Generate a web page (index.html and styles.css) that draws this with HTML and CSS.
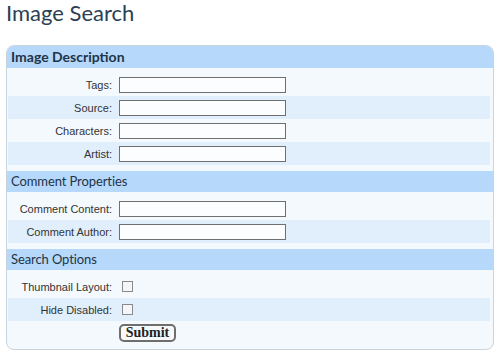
FILE: index.html
```html
<!DOCTYPE html>
<html>
<head>
<meta charset="utf-8">
<link rel="stylesheet" href="styles.css">
</head>
<body>
<h1 class="title">Image Search</h1>
<form class="panel">
  <div class="section-head first">Image Description</div>
  <div class="section-body">
    <div class="row"><label class="lbl">Tags:</label><input class="txt" type="text"></div>
    <div class="row alt"><label class="lbl">Source:</label><input class="txt" type="text"></div>
    <div class="row"><label class="lbl">Characters:</label><input class="txt" type="text"></div>
    <div class="row alt"><label class="lbl">Artist:</label><input class="txt" type="text"></div>
  </div>
  <div class="section-head">Comment Properties</div>
  <div class="section-body">
    <div class="row"><label class="lbl">Comment Content:</label><input class="txt" type="text"></div>
    <div class="row alt"><label class="lbl">Comment Author:</label><input class="txt" type="text"></div>
  </div>
  <div class="section-head">Search Options</div>
  <div class="section-body last">
    <div class="row"><label class="lbl">Thumbnail Layout:</label><span class="chk"></span></div>
    <div class="row alt"><label class="lbl">Hide Disabled:</label><span class="chk"></span></div>
    <div class="row"><span></span><button class="btn" type="button">Submit</button></div>
  </div>
</form>
</body>
</html>
```
FILE: styles.css
```css
html, body {
  margin: 0;
  padding: 0;
  background: #ffffff;
}
body {
  width: 500px;
  height: 353px;
  overflow: hidden;
}
.title {
  margin: 0;
  padding: 0 0 0 6px;
  height: 45px;
  box-sizing: border-box;
  font-family: Lato, "Open Sans", sans-serif;
  font-weight: 400;
  font-size: 22px;
  line-height: 26px;
  color: #2b4053;
}
.panel {
  margin: 0 0 0 6px;
  width: 488px;
  box-sizing: border-box;
  border: 1px solid #c9d5dd;
  border-radius: 8px;
  background: #f4f9fe;
  overflow: hidden;
}
.section-head {
  height: 21px;
  padding-left: 4px;
  background: #b5d8fb;
  font-family: Lato, "Open Sans", sans-serif;
  font-size: 13px;
  letter-spacing: -0.1px;
  line-height: 21px;
  color: #1f3447;
}
.section-head.first {
  height: 22px;
  line-height: 22px;
  font-size: 14px;
  letter-spacing: 0;
  font-weight: 700;
}
.section-body {
  padding: 5px 3px 6px 1px;
}
.section-body.last {
  padding-bottom: 5px;
}
.row {
  display: grid;
  grid-template-columns: 104px 167px;
  column-gap: 7px;
  align-items: center;
  height: 23px;
}
.row.alt {
  background: #e1effd;
}
.lbl {
  text-align: right;
  font-family: "Liberation Sans", Arial, sans-serif;
  font-size: 11px;
  color: #333333;
}
.txt {
  box-sizing: border-box;
  width: 167px;
  height: 16px;
  margin: 0;
  padding: 0;
  border: 1px solid #6f6f6f;
  background: #fbfdff;
}
.chk {
  display: block;
  width: 11px;
  height: 11px;
  margin-left: 3px;
  box-sizing: border-box;
  border: 1px solid #8a8a8a;
  background: #f4f6f8;
}
.btn {
  justify-self: start;
  width: 57px;
  height: 18px;
  margin: 0;
  padding: 0;
  box-sizing: border-box;
  border: 2px solid #6e6e6e;
  border-radius: 5px;
  background: #f6f8fa;
  font-family: "Liberation Serif", "Times New Roman", serif;
  font-weight: 700;
  font-size: 14px;
  line-height: 14px;
  color: #222222;
}
```
